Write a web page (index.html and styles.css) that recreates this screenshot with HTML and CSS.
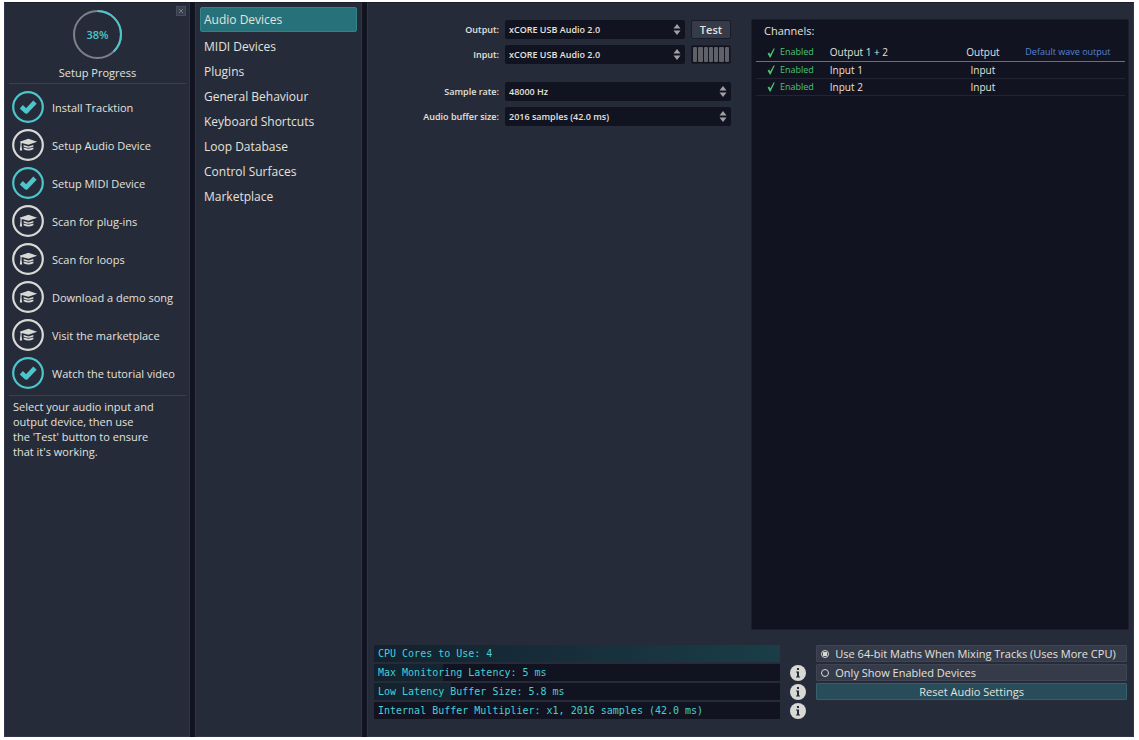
FILE: index.html
```html
<!DOCTYPE html>
<html lang="en">
<head>
    <meta charset="UTF-8">
    <meta name="viewport" content="width=device-width, initial-scale=1.0">
    <title>Audio Devices</title>
    <link rel="stylesheet" href="styles.css">
</head>
<body>
    <!-- shared icons -->
    <svg class="sprite" aria-hidden="true">
        <symbol id="done" viewBox="0 0 32 32">
            <circle cx="16" cy="16" r="14.8" fill="none" stroke="currentColor" stroke-width="2.2"/>
            <path d="M9.3 15.8l4.9 4.6 8.8-9.2" fill="none" stroke="currentColor" stroke-width="4.6" stroke-linejoin="round"/>
        </symbol>
        <symbol id="todo" viewBox="0 0 32 32">
            <circle cx="16" cy="16" r="14.8" fill="none" stroke="currentColor" stroke-width="2.2"/>
            <path d="M16.4 9.8l8.8 3-8.8 3-6.6-1.8-.3 2.4.7 5H7.8l.6-5 .2-2.7-1-.9z" fill="currentColor"/>
            <path d="M11.6 16l4.8 1.4 5-1.4v1.4q-5 2.6-9.800 0zM11.600 18.600q4.800 2.200 9.800 0v1.600q-5 2.800-9.800 0z" fill="currentColor"/>
        </symbol>
        <symbol id="arrows" viewBox="0 0 8 11">
            <path d="M4 0l3.5 4.5h-7zM4 11L.5 6.5h7z" fill="currentColor"/>
        </symbol>
        <symbol id="tick" viewBox="0 0 8 10">
            <path d="M.6 5.4l1.600-.8 1.100 2L6.600.6 7.800.4 3.600 9.600H2.800z" fill="currentColor"/>
        </symbol>
        <symbol id="info" viewBox="0 0 16 16">
            <circle cx="8" cy="8" r="8" fill="#d8d8d4"/>
            <path d="M7 3h2v2H7zM6 6.5h3v5h1v1H6v-1h1v-4H6z" fill="#262b3a"/>
        </symbol>
    </svg>

    <div class="app">
        <aside class="setup">
            <button class="close" aria-label="Close">
                <svg viewBox="0 0 6 6"><path d="M1 1l4 4M5 1L1 5" stroke="currentColor"/></svg>
            </button>
            <div class="progress">
                <svg viewBox="0 0 48 48">
                    <circle cx="24" cy="24" r="23" fill="none" stroke="#7d8087" stroke-width="2"/>
                    <circle cx="24" cy="24" r="23" fill="none" stroke="#4cc5cb" stroke-width="2" pathLength="100" stroke-dasharray="38 62" transform="rotate(-90 24 24)"/>
                </svg>
                <span>38%</span>
            </div>
            <h2>Setup Progress</h2>
            <ul class="steps">
                <li class="done"><svg><use href="#done"/></svg>Install Tracktion</li>
                <li><svg><use href="#todo"/></svg>Setup Audio Device</li>
                <li class="done"><svg><use href="#done"/></svg>Setup MIDI Device</li>
                <li><svg><use href="#todo"/></svg>Scan for plug-ins</li>
                <li><svg><use href="#todo"/></svg>Scan for loops</li>
                <li><svg><use href="#todo"/></svg>Download a demo song</li>
                <li><svg><use href="#todo"/></svg>Visit the marketplace</li>
                <li class="done"><svg><use href="#done"/></svg>Watch the tutorial video</li>
            </ul>
            <p class="hint">Select your audio input and output device, then use<br>the 'Test' button to ensure that it's working.</p>
        </aside>

        <nav class="menu">
            <a class="active" href="#audio">Audio Devices</a>
            <a href="#midi">MIDI Devices</a>
            <a href="#plugins">Plugins</a>
            <a href="#general">General Behaviour</a>
            <a href="#keyboard">Keyboard Shortcuts</a>
            <a href="#loops">Loop Database</a>
            <a href="#surfaces">Control Surfaces</a>
            <a href="#marketplace">Marketplace</a>
        </nav>

        <main class="content">
            <div class="top">
                <form class="devices">
                    <div class="row">
                        <label for="output">Output:</label>
                        <div class="select">
                            <select id="output"><option>xCORE USB Audio 2.0</option></select>
                            <svg><use href="#arrows"/></svg>
                        </div>
                        <button class="test" type="button">Test</button>
                    </div>
                    <div class="row">
                        <label for="input">Input:</label>
                        <div class="select">
                            <select id="input"><option>xCORE USB Audio 2.0</option></select>
                            <svg><use href="#arrows"/></svg>
                        </div>
                        <div class="meter"><i></i><i></i><i></i><i></i><i></i><i></i><i></i></div>
                    </div>
                    <div class="row spaced">
                        <label for="rate">Sample rate:</label>
                        <div class="select">
                            <select id="rate"><option>48000 Hz</option></select>
                            <svg><use href="#arrows"/></svg>
                        </div>
                    </div>
                    <div class="row">
                        <label for="buffer">Audio buffer size:</label>
                        <div class="select">
                            <select id="buffer"><option>2016 samples (42.0 ms)</option></select>
                            <svg><use href="#arrows"/></svg>
                        </div>
                    </div>
                </form>

                <section class="channels">
                    <h3>Channels:</h3>
                    <table>
                        <tr>
                            <td class="enabled"><svg><use href="#tick"/></svg>Enabled</td>
                            <td class="name">Output 1 + 2</td>
                            <td class="type">Output</td>
                            <td class="default">Default wave output</td>
                        </tr>
                        <tr>
                            <td class="enabled"><svg><use href="#tick"/></svg>Enabled</td>
                            <td class="name">Input 1</td>
                            <td class="type">Input</td>
                            <td></td>
                        </tr>
                        <tr>
                            <td class="enabled"><svg><use href="#tick"/></svg>Enabled</td>
                            <td class="name">Input 2</td>
                            <td class="type">Input</td>
                            <td></td>
                        </tr>
                    </table>
                </section>
            </div>

            <div class="bottom">
                <div class="sliders">
                    <div class="slider" style="--fill: 100%">
                        <input type="range" id="cores" min="1" max="4" value="4">
                        <label for="cores">CPU Cores to Use: 4</label>
                    </div>
                    <div class="slider" style="--fill: 17%">
                        <input type="range" id="latency" min="0" max="30" value="5">
                        <label for="latency">Max Monitoring Latency: 5 ms</label>
                    </div>
                    <div class="slider" style="--fill: 19%">
                        <input type="range" id="low" min="0" max="30" step="0.1" value="5.8">
                        <label for="low">Low Latency Buffer Size: 5.8 ms</label>
                    </div>
                    <div class="slider" style="--fill: 0%">
                        <input type="range" id="multiplier" min="1" max="8" value="1">
                        <label for="multiplier">Internal Buffer Multiplier: x1, 2016 samples (42.0 ms)</label>
                    </div>
                </div>
                <div class="infos">
                    <button aria-label="About monitoring latency"><svg><use href="#info"/></svg></button>
                    <button aria-label="About low latency buffer"><svg><use href="#info"/></svg></button>
                    <button aria-label="About buffer multiplier"><svg><use href="#info"/></svg></button>
                </div>
                <div class="options">
                    <label><input type="checkbox" checked>Use 64-bit Maths When Mixing Tracks (Uses More CPU)</label>
                    <label><input type="checkbox">Only Show Enabled Devices</label>
                    <button>Reset Audio Settings</button>
                </div>
            </div>
        </main>
    </div>
</body>
</html>
```
FILE: styles.css
```css
* {
    margin: 0;
    padding: 0;
    box-sizing: border-box;
}

body {
    display: flex;
    min-height: 100vh;
    padding: 2px 5px 3px 4px;
    background: #fff;
    color: #e2e2de;
    font-family: "Open Sans", "Noto Sans", sans-serif;
    font-size: 12px;
    font-weight: 500;
}

button, select, input {
    font: inherit;
    color: inherit;
    border: none;
}

svg {
    display: block;
}

.sprite {
    position: absolute;
    width: 0;
    height: 0;
}

.app {
    flex: 1;
    display: grid;
    grid-template-columns: 186px 167px 1fr;
    gap: 5px;
    background: #121320;
}

.setup, .menu, .content {
    background: #262b3a;
    border: 1px solid #30354a;
    border-top-color: #1b1e2c;
}

/* setup progress */
.setup {
    position: relative;
    padding: 7px 3px 7px 4px;
    font-size: 11px;
}

.close {
    position: absolute;
    top: 3px;
    right: 3px;
    width: 10px;
    height: 10px;
    padding: 1px;
    background: #3a3f4e;
    border: 1px solid #474c5a;
    color: #757a86;
}

.progress {
    display: grid;
    place-items: center;
}

.progress svg, .progress span {
    grid-area: 1 / 1;
}

.progress svg {
    width: 49px;
    height: 49px;
}

.progress span {
    color: #4cc5cb;
    font-weight: 600;
}

.setup h2 {
    padding: 6px 0 2px;
    border-bottom: 1px solid #3b4050;
    font-size: 11px;
    font-weight: 500;
    line-height: 16px;
    text-align: center;
}

.steps {
    display: grid;
    gap: 6px;
    padding: 7px 0 6px 3px;
    border-bottom: 1px solid #3b4050;
    list-style: none;
}

.steps li {
    display: flex;
    align-items: center;
    gap: 8px;
    white-space: nowrap;
}

.steps svg {
    width: 32px;
    height: 32px;
    color: #d8d8d4;
}

.steps .done svg {
    color: #4cc5cb;
}

.hint {
    padding: 3px 20px 0 4px;
    line-height: 15px;
}

/* settings pages */
.menu {
    display: flex;
    flex-direction: column;
    padding: 4px;
}

.menu a {
    padding: 0 4px;
    line-height: 25px;
    color: inherit;
    text-decoration: none;
}

.menu .active {
    margin-bottom: 2px;
    background: #27727a;
    border: 1px solid #338389;
    padding: 0 3px;
    line-height: 23px;
    border-radius: 2px;
}

/* audio devices page */
.content {
    display: flex;
    flex-direction: column;
    padding: 16px 4px 17px 6px;
}

.top {
    flex: 1;
    display: grid;
    grid-template-columns: 17fr 18fr;
    gap: 20px;
}

.devices {
    display: flex;
    flex-direction: column;
    gap: 6px;
    padding-top: 1px;
    font-size: 9px;
    font-weight: 600;
}

.row {
    display: flex;
    align-items: center;
    gap: 6px;
}

.spaced {
    margin-top: 12px;
}

.row label {
    width: 125px;
    text-align: right;
}

.select {
    flex: 1;
    display: grid;
    align-items: center;
}

.select select, .select svg {
    grid-area: 1 / 1;
}

.select select {
    height: 19px;
    padding: 0 20px 0 4px;
    background: #121320;
    border-radius: 2px;
    appearance: none;
}

.select svg {
    width: 8px;
    height: 11px;
    margin-right: 4px;
    justify-self: end;
    color: #a0a2a6;
    pointer-events: none;
}

.test, .meter {
    width: 40px;
    height: 19px;
    border: 1px solid #1a1c2a;
    border-radius: 2px;
}

.test {
    background: #363b4a;
    font-size: 11px;
    font-weight: 600;
    line-height: 16px;
}

.meter {
    display: flex;
    gap: 1px;
    padding: 1px;
    background: #121320;
}

.meter i {
    flex: 1;
    background: #606168;
    border-radius: 1px;
}

.channels {
    padding: 3px 3px 4px 4px;
    background: #121320;
    border: 1px solid #1c1e2b;
    border-radius: 2px;
}

.channels h3 {
    padding-left: 8px;
    font-size: 11px;
    font-weight: 500;
    line-height: 16px;
}

.channels table {
    width: 100%;
    margin-top: 5px;
    border-collapse: collapse;
    table-layout: fixed;
    font-size: 10px;
}

.channels td {
    height: 17px;
    border-bottom: 1px solid #222431;
    line-height: 16px;
    white-space: nowrap;
}

.channels tr:first-child td {
    border-bottom-color: #70716f;
}

.channels .enabled {
    width: 20%;
    padding-left: 11px;
    color: #4cc474;
    font-size: 9px;
}

.enabled svg {
    display: inline-block;
    width: 8px;
    height: 10px;
    margin-right: 5px;
    vertical-align: middle;
}

.channels .type {
    width: 17%;
    text-align: center;
}

.channels .default {
    width: 30%;
    padding-left: 11px;
    color: #5583d4;
    font-size: 9px;
}

.bottom {
    display: grid;
    grid-template-columns: minmax(0, 17fr) 16px minmax(0, 13fr);
    gap: 10px;
    padding: 15px 2px 0 0;
}

.sliders, .options {
    display: flex;
    flex-direction: column;
    gap: 2px;
}

.slider {
    display: grid;
    align-items: center;
    background: #121320;
    border-radius: 1px;
}

.slider input, .slider label {
    grid-area: 1 / 1;
}

.slider input {
    width: var(--fill);
    height: 17px;
    background: linear-gradient(90deg, #13212e, #1a3d48);
    background-size: 406px 17px;
    appearance: none;
}

.slider input::-webkit-slider-thumb {
    appearance: none;
    width: 0;
}

.slider label {
    padding-left: 4px;
    color: #45d0d6;
    font-family: "DejaVu Sans Mono", monospace;
    font-size: 10px;
}

.infos {
    display: flex;
    flex-direction: column;
    gap: 3px;
    padding-top: 20px;
}

.infos button {
    background: none;
}

.infos svg {
    width: 16px;
    height: 16px;
}

.options {
    font-size: 11px;
}

.options label, .options button {
    height: 17px;
    line-height: 15px;
    border: 1px solid #404554;
    border-radius: 1px;
}

.options label {
    display: flex;
    align-items: center;
    gap: 6px;
    padding-left: 4px;
    background: #363b4a;
    white-space: nowrap;
}

.options input {
    width: 8px;
    height: 8px;
    border: 1px solid #d8d8d4;
    border-radius: 50%;
    appearance: none;
}

.options input:checked {
    background: radial-gradient(#d8d8d4 50%, transparent 60%);
}

.options button {
    background: #284c5a;
    border-color: #36616c;
}
```
